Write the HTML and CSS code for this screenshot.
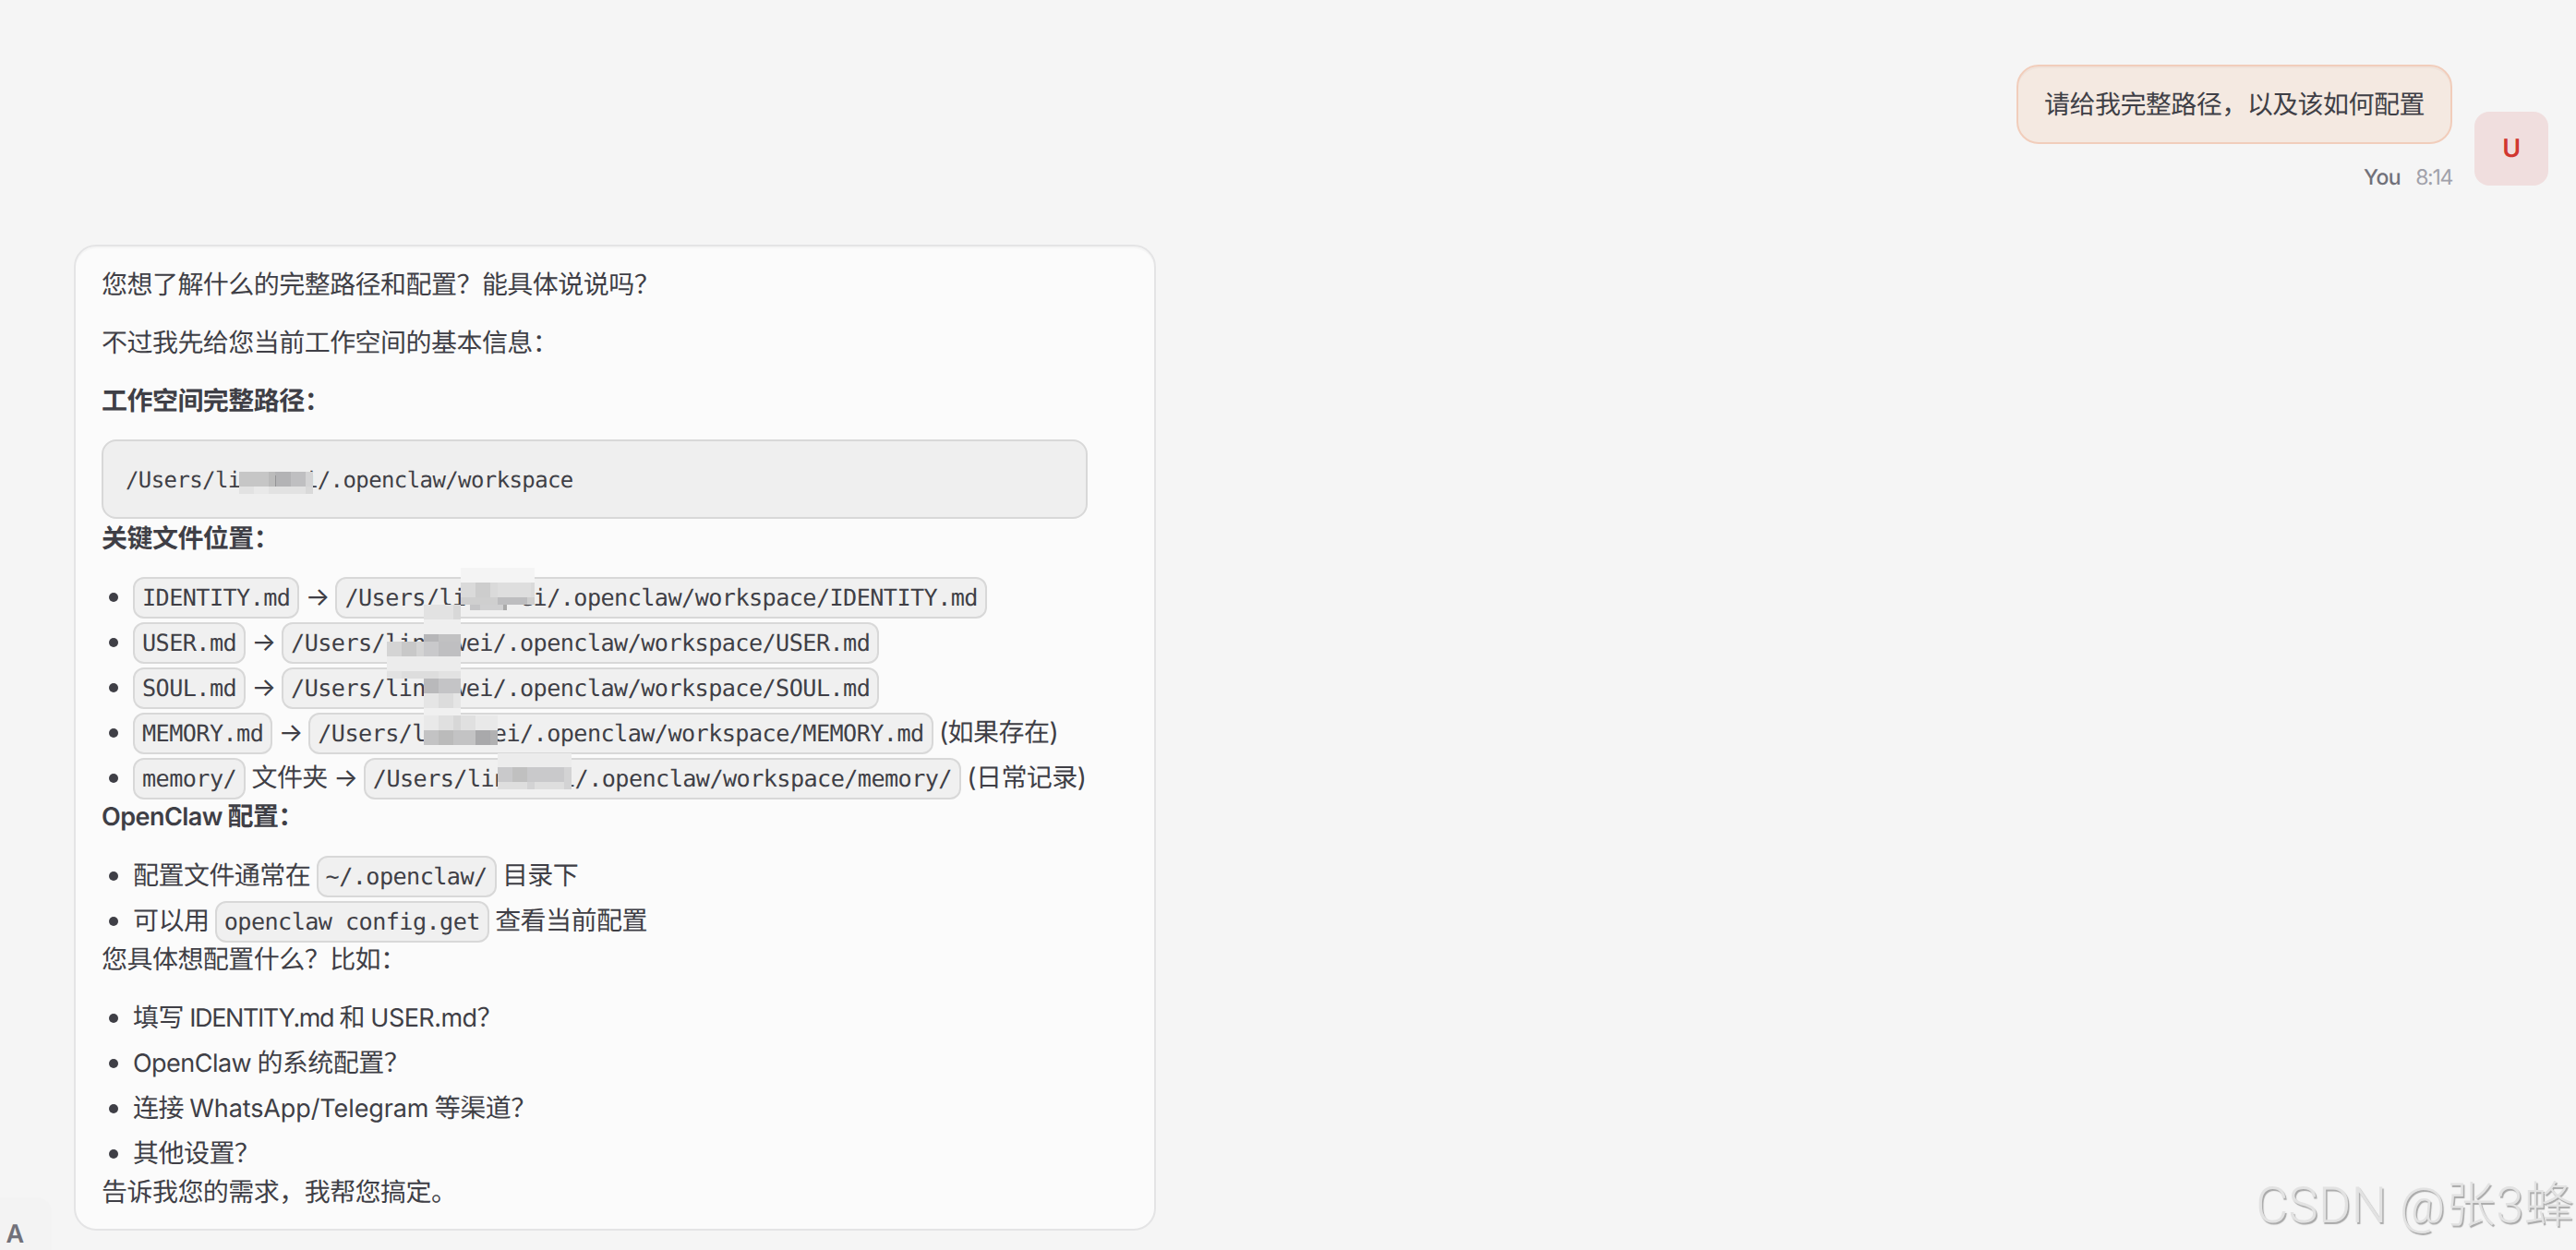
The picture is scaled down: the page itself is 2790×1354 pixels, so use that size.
FILE: index.html
```html
<!DOCTYPE html>
<html lang="zh-CN">
<head>
<meta charset="utf-8">
<title>Chat</title>
<link rel="stylesheet" href="styles.css">
</head>
<body>
<main class="chat">
  <section class="group group-user">
    <div class="group-body">
      <div class="bubble bubble-user">请给我完整路径，以及该如何配置</div>
      <div class="meta"><span class="sender">You</span><span class="time">8:14</span></div>
    </div>
    <div class="avatar avatar-user">U</div>
  </section>
  <section class="group group-assistant">
    <div class="avatar avatar-assistant">A</div>
    <article class="bubble bubble-assistant">
      <p>您想了解什么的完整路径和配置？能具体说说吗？</p>
      <p>不过我先给您当前工作空间的基本信息：</p>
      <p class="strong">工作空间完整路径：</p>
      <pre class="block">/Users/li&nbsp;&nbsp;&nbsp;&nbsp;&nbsp;i/.openclaw/workspace</pre>
      <p class="strong">关键文件位置：</p>
      <ul>
        <li><code>IDENTITY.md</code><span class="arrow">→</span><code>/Users/li&nbsp;&nbsp;&nbsp;&nbsp;ei/.openclaw/workspace/IDENTITY.md</code></li>
        <li><code>USER.md</code><span class="arrow">→</span><code>/Users/lin&nbsp;&nbsp;wei/.openclaw/workspace/USER.md</code></li>
        <li><code>SOUL.md</code><span class="arrow">→</span><code>/Users/lin&nbsp;&nbsp;wei/.openclaw/workspace/SOUL.md</code></li>
        <li><code>MEMORY.md</code><span class="arrow">→</span><code>/Users/l&nbsp;&nbsp;&nbsp;&nbsp;&nbsp;ei/.openclaw/workspace/MEMORY.md</code> (如果存在)</li>
        <li><code>memory/</code> 文件夹<span class="arrow">→</span><code>/Users/lin&nbsp;&nbsp;&nbsp;&nbsp;i/.openclaw/workspace/memory/</code> (日常记录)</li>
      </ul>
      <p class="strong"><span class="latin">OpenClaw</span> 配置：</p>
      <ul>
        <li>配置文件通常在 <code>~/.openclaw/</code> 目录下</li>
        <li>可以用 <code>openclaw config.get</code> 查看当前配置</li>
      </ul>
      <p>您具体想配置什么？比如：</p>
      <ul>
        <li>填写 <span class="latin latin-tight">IDENTITY.md</span> 和 <span class="latin">USER.md</span>？</li>
        <li><span class="latin">OpenClaw</span> 的系统配置？</li>
        <li>连接 <span class="latin latin-loose">WhatsApp/Telegram</span> 等渠道？</li>
        <li>其他设置？</li>
      </ul>
      <p>告诉我您的需求，我帮您搞定。</p>
    </article>
  </section>
  <svg class="mosaic" width="380" height="360" viewBox="250 505 380 360" shape-rendering="crispEdges">
    <!-- code block -->
    <path fill="#c6c6c6" d="M259 511h32v16h-32z"/><path fill="#bbb" d="M291 511h7v16h-7z"/><path fill="#b3b3b5" d="M298 511h17v16h-17z"/><path fill="#bfbfc1" d="M315 511h16v16h-16z"/><path fill="#d4d4d5" d="M331 511h8v16h-8z"/>
    <path fill="#e2e2e2" d="M259 527h16v8h-16zM291 527h40v8h-40z"/><path fill="#e9e9e9" d="M275 527h16v8h-16z"/><path fill="#d9d9d9" d="M331 527h8v8h-8z"/>
    <path fill="#949496" d="M298 515h1v12h-1z"/>
    <!-- IDENTITY.md row -->
    <path fill="#f4f4f4" d="M499 615h80v16h-80z"/>
    <path fill="#dadada" d="M499 631h16v16h-16zM531 631h8v16h-8zM575 631h4v16h-4z"/><path fill="#cdcdcd" d="M515 631h16v16h-16z"/><path fill="#dedede" d="M539 631h36v16h-36z"/>
    <path fill="#cfcfcf" d="M499 647h40v8h-40zM571 647h8v8h-8z"/><path fill="#bdbdbf" d="M539 647h32v8h-32z"/>
    <path fill="#c5c5c7" d="M509 655h11v6h-11z"/><path fill="#d0d0d1" d="M520 655h25v6h-25z"/><path fill="#aaa" d="M545 655h4v6h-4z"/>
    <!-- USER.md and SOUL.md rows -->
    <path fill="#e2e2e2" d="M459 655h32v16h-32z"/><path fill="#d8d8d8" d="M491 655h8v16h-8z"/><path fill="#efefef" d="M459 671h40v16h-40z"/>
    <path fill="#b6b6b8" d="M459 687h16v8h-16z"/><path fill="#c1c1c2" d="M475 687h24v8h-24z"/>
    <path fill="#c9c9cb" d="M459 695h16v16h-16z"/><path fill="#bfbfc1" d="M475 695h24v16h-24z"/>
    <path fill="#d4d4d4" d="M419 695h16v16h-16zM451 695h8v16h-8z"/><path fill="#c8c8c8" d="M435 695h16v16h-16z"/>
    <path fill="#ececec" d="M419 711h80v16h-80z"/><path fill="#e2e2e2" d="M419 727h16v8h-16zM475 727h24v8h-24z"/><path fill="#ddd" d="M435 727h40v8h-40z"/>
    <path fill="#b9b9bb" d="M459 735h16v16h-16z"/><path fill="#c4c4c6" d="M475 735h24v16h-24z"/>
    <path fill="#e5e5e5" d="M459 751h40v16h-40z"/><path fill="#dcdcdc" d="M475 751h16v16h-16z"/><path fill="#f0f0f0" d="M459 767h40v8h-40z"/>
    <!-- MEMORY.md row -->
    <path fill="#e9e9e9" d="M459 775h80v16h-80z"/><path fill="#e0e0e0" d="M475 775h16v16h-16zM499 775h16v16h-16z"/><path fill="#d7d7d7" d="M491 775h8v16h-8z"/>
    <path fill="#c3c3c4" d="M459 791h56v16h-56z"/><path fill="#bbb" d="M475 791h16v16h-16z"/><path fill="#a9a9ab" d="M515 791h16v16h-16z"/><path fill="#b1b1b2" d="M531 791h8v16h-8z"/>
    <path fill="#f0f0f0" d="M459 807h80v8h-80z"/>
    <!-- memory/ row -->
    <path fill="#ececec" d="M539 816h80v15h-80z"/><path fill="#c9c9cb" d="M539 831h72v16h-72z"/><path fill="#c0c0c0" d="M555 831h16v16h-16z"/><path fill="#d3d3d4" d="M611 831h8v24h-8zM571 847h8v8h-8z"/><path fill="#dedede" d="M539 847h32v8h-32zM579 847h32v8h-32z"/>
  </svg>
  <div class="watermark">CSDN @张3蜂</div>
</main>
</body>
</html>
```
FILE: styles.css
```css
* { box-sizing: border-box; }
body {
  margin: 0;
  background: #f5f5f5;
  color: #3f3f46;
  font: 28px/42px Inter, "Noto Sans CJK SC", sans-serif;
  letter-spacing: -0.54px;
  text-rendering: geometricPrecision;
}
.chat {
  position: relative;
  height: 1354px;
  overflow: hidden;
  padding-top: 70px;
}
.group { display: flex; }
.group-user {
  height: 195px;
  justify-content: flex-end;
  gap: 24px;
  padding-right: 30px;
}
.group-body { display: flex; flex-direction: column; align-items: flex-end; }
.bubble { border: 2px solid #e4e4e5; border-radius: 24px; }
.bubble-user {
  width: 472px;
  padding: 20px 28px;
  white-space: nowrap;
  background: #f4e9e1;
  border-color: #f1cdbb;
  box-shadow: inset 0 2px 0 #efe2da;
}
.meta { display: flex; gap: 16px; margin-top: 21px; font-size: 23px; line-height: 30px; color: #a1a1aa; }
.sender { font-weight: 500; color: #71717a; }
.time { letter-spacing: -1.3px; }
.avatar {
  display: flex;
  align-items: center;
  justify-content: center;
  flex: none;
  width: 80px;
  height: 80px;
  border-radius: 16px;
  font-size: 27px;
  font-weight: 600;
}
.avatar-user { margin-top: 51px; background: #f0dede; color: #d1362f; }
.group-assistant { gap: 24px; margin-left: -24px; height: 1112px; word-spacing: -1px; }
.avatar-assistant { align-self: flex-end; background: #f3f3f3; color: #71717a; }
.bubble-assistant {
  width: 1172px;
  height: 1068px;
  padding: 20px 72px 20px 28px;
  background: #fbfbfb;
  box-shadow: inset 0 2px 0 #f5f5f5;
}
p { margin: 0 0 21px; white-space: nowrap; }
.strong { font-weight: 600; }
.latin { font-size: 27px; }
.latin-tight { letter-spacing: -1.4px; }
.latin-loose { letter-spacing: -0.1px; }
.block {
  margin: 0;
  height: 86px;
  padding: 0 24px;
  border: 2px solid #d8d8d8;
  border-radius: 16px;
  background: #efefef;
  font: 24px/84px "DejaVu Sans Mono", monospace;
  letter-spacing: -0.6px;
  word-spacing: 0;
}
ul { list-style: none; margin: 0; padding: 0 0 0 34px; }
li { height: 49px; white-space: nowrap; }
li:last-child { height: 42px; }
li::before {
  content: "";
  display: inline-block;
  width: 10px;
  height: 10px;
  margin: 0 16px 0 -26px;
  border-radius: 50%;
  background: #3f3f46;
  vertical-align: 4px;
}
code {
  display: inline-block;
  height: 45px;
  margin: -2px 0;
  padding: 0 8px;
  border: 2px solid #d8d8d8;
  border-radius: 12px;
  background: #f0f0f0;
  font: 25.2px/41px "DejaVu Sans Mono", monospace;
  letter-spacing: -0.58px;
  word-spacing: 0;
}
.arrow {
  display: inline-block;
  width: 39px;
  text-align: center;
  font-size: 28px;
}
.mosaic { position: absolute; left: 250px; top: 505px; }
.watermark {
  position: absolute;
  right: 2px;
  bottom: 15px;
  font: 300 54px/64px Roboto, "Noto Sans CJK SC", sans-serif;
  letter-spacing: 0.4px;
  color: #e2e2e2;
  text-shadow: 1.5px 1.5px 1px #a8a8a8;
}
```
